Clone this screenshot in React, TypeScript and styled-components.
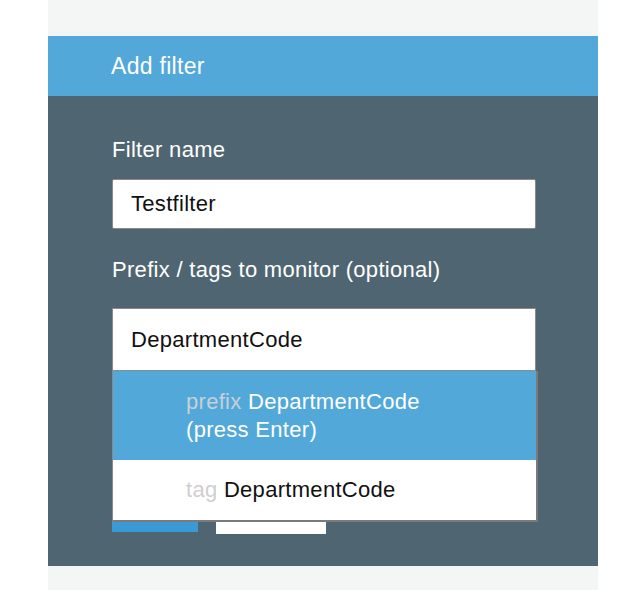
import React from "react";
import styled, { createGlobalStyle } from "styled-components";

const Global = createGlobalStyle`
  html, body { margin: 0; padding: 0; background: #ffffff; }
  body { font-family: "Liberation Sans", Arial, Helvetica, sans-serif; letter-spacing: 0.3px; }
`;

const Panel = styled.div`
  width: 550px;
  margin-left: 48px;
  display: flex;
  flex-direction: column;
`;

const TopBand = styled.div`
  height: 36px;
  background: #f4f5f5;
`;

const Header = styled.div`
  height: 60px;
  background: #53a8da;
  color: #ffffff;
  font-size: 23px;
  display: flex;
  align-items: center;
  padding-left: 63px;
  padding-top: 1px;
  box-sizing: border-box;
`;

const Body = styled.div`
  background: #4f6672;
  padding: 40px 62px 32px 64px;
  display: flex;
  flex-direction: column;
`;

const Label = styled.div`
  color: #ffffff;
  font-size: 22px;
  line-height: 28px;
`;

const TextBox = styled.div<{ $tall?: boolean }>`
  margin-top: ${(p) => (p.$tall ? "24px" : "15px")};
  height: ${(p) => (p.$tall ? "63px" : "50px")};
  box-sizing: border-box;
  background: #ffffff;
  border: 1px solid #8a8a8a;
  border-radius: ${(p) => (p.$tall ? "0" : "2px")};
  padding-left: 18px;
  display: flex;
  align-items: center;
  font-size: 22px;
  color: #111111;
`;

const Spacer = styled.div`
  height: 27px;
`;

const ComboWrap = styled.div`
  position: relative;
  display: flex;
  flex-direction: column;
`;

const Menu = styled.div`
  position: absolute;
  top: 100%;
  left: 0;
  width: 426px;
  box-sizing: border-box;
  border-left: 1px solid #8a8a8a;
  border-right: 2px solid #7b7b7b;
  border-bottom: 2px solid #7b7b7b;
  display: flex;
  flex-direction: column;
  z-index: 2;
`;

const Option = styled.div<{ $active?: boolean }>`
  background: ${(p) => (p.$active ? "#53a8da" : "#ffffff")};
  color: ${(p) => (p.$active ? "#ffffff" : "#111111")};
  padding: ${(p) => (p.$active ? "17px 20px 16px 73px" : "16px 20px 16px 73px")};
  font-size: 22px;
  line-height: 28px;
`;

const Kind = styled.span<{ $onBlue?: boolean }>`
  color: ${(p) => (p.$onBlue ? "#c6d0d7" : "#cfcfcf")};
`;

const Buttons = styled.div`
  margin-top: 121px;
  display: flex;
  align-items: flex-start;
  gap: 18px;
`;

const Button = styled.div<{ $primary?: boolean }>`
  width: ${(p) => (p.$primary ? "86px" : "110px")};
  height: ${(p) => (p.$primary ? "40px" : "42px")};
  background: ${(p) => (p.$primary ? "#3a9bd4" : "#ffffff")};
`;

const BottomBand = styled.div`
  height: 24px;
  background: #f4f5f5;
`;

export default function App() {
  return (
    <>
      <Global />
      <Panel>
        <TopBand />
        <Header>Add filter</Header>
        <Body>
          <Label>Filter name</Label>
          <TextBox>Testfilter</TextBox>
          <Spacer />
          <Label>Prefix / tags to monitor (optional)</Label>
          <ComboWrap>
            <TextBox $tall>DepartmentCode</TextBox>
            <Menu>
              <Option $active>
                <Kind $onBlue>prefix</Kind> DepartmentCode
                <br />
                (press Enter)
              </Option>
              <Option>
                <Kind>tag</Kind> DepartmentCode
              </Option>
            </Menu>
          </ComboWrap>
          <Buttons>
            <Button $primary />
            <Button />
          </Buttons>
        </Body>
        <BottomBand />
      </Panel>
    </>
  );
}
